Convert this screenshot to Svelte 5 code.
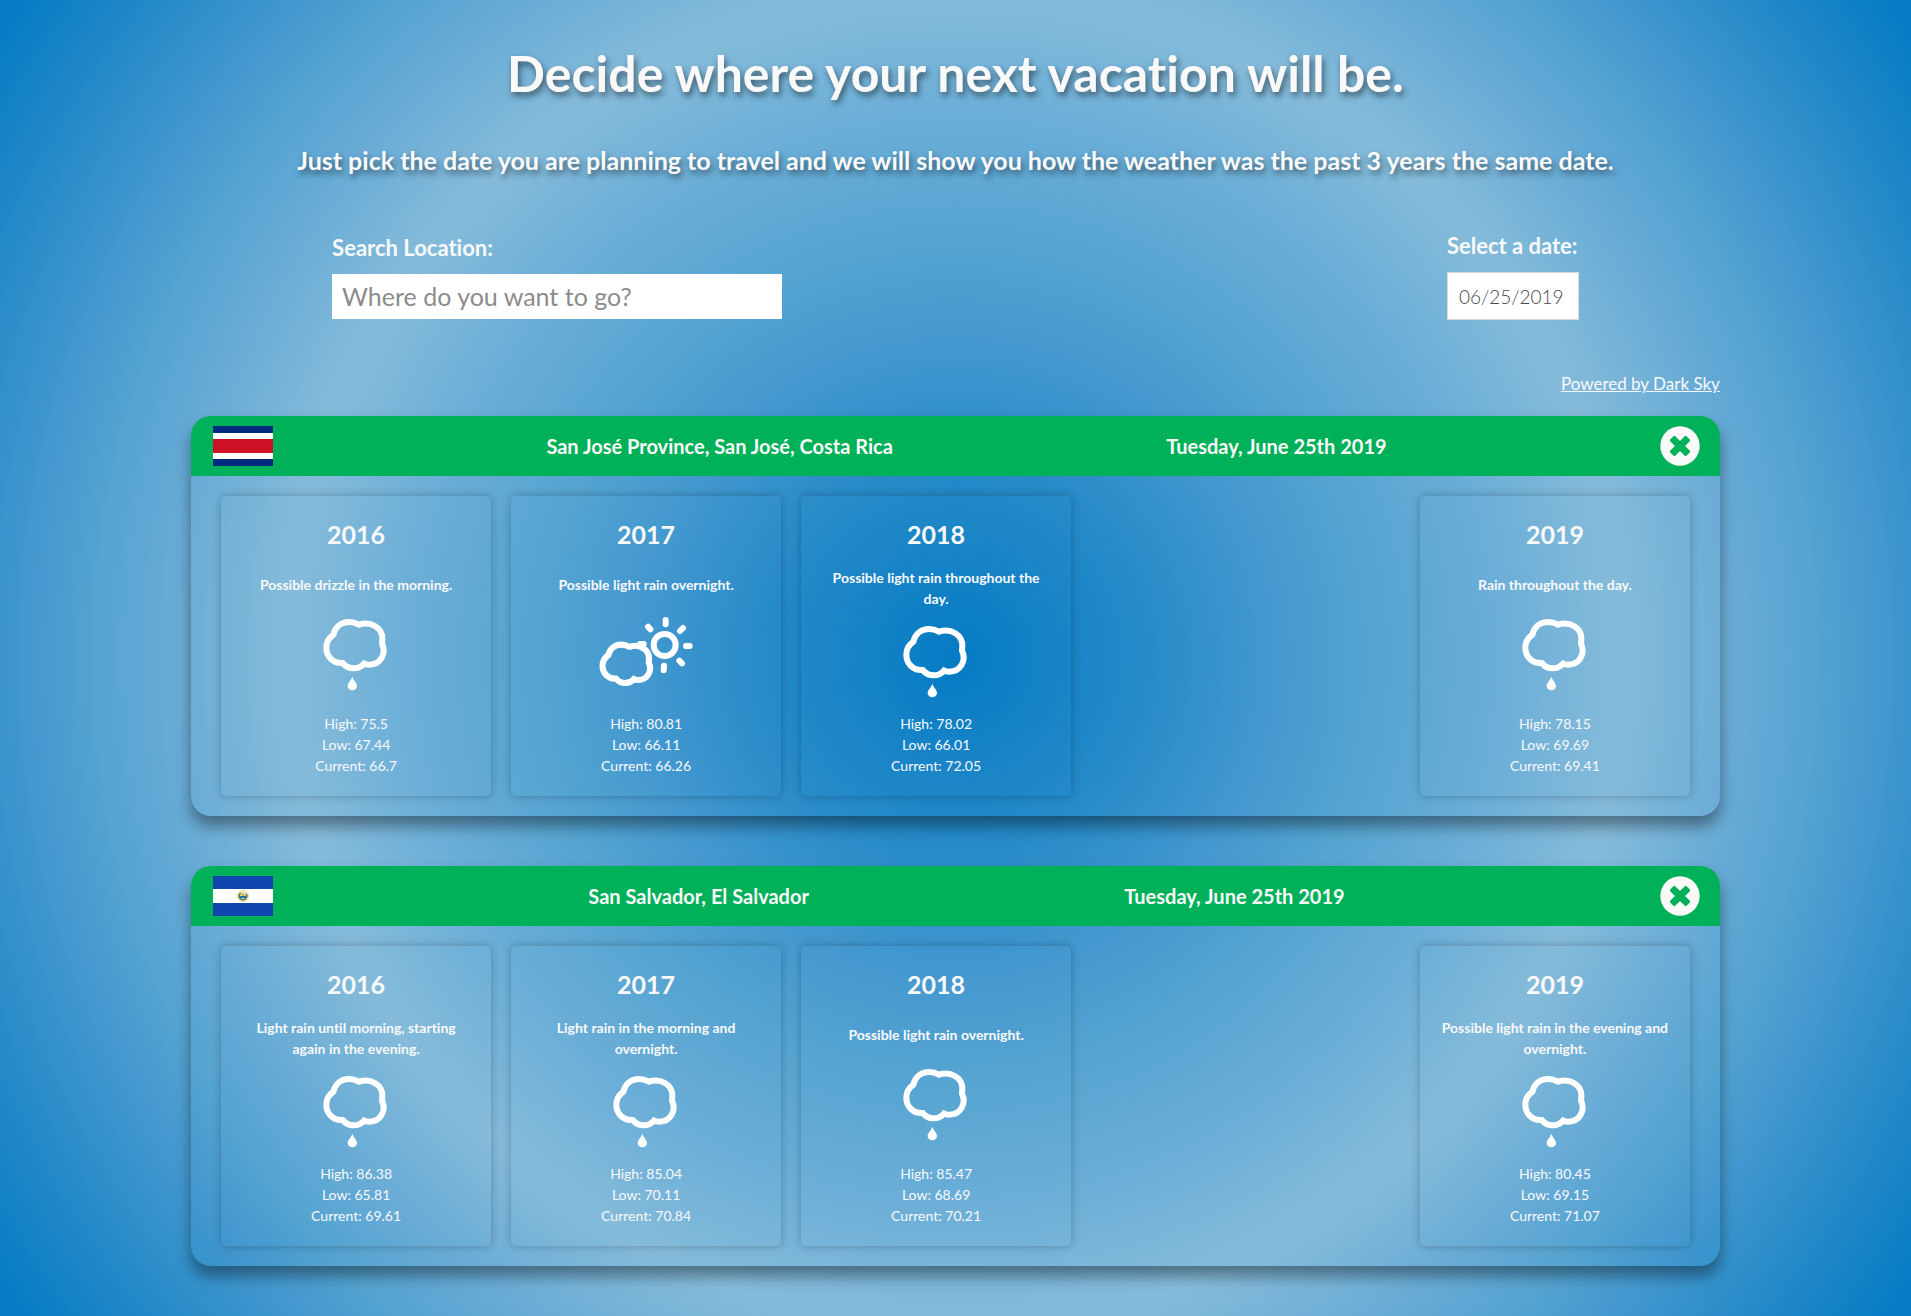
<script>
  const locations = [
    {
      flag: 'cr', place: 'San José Province, San José, Costa Rica', date: 'Tuesday, June 25th 2019',
      years: [
        { year: 2016, summary: 'Possible drizzle in the morning.', icon: 'rain', high: '75.5', low: '67.44', current: '66.7' },
        { year: 2017, summary: 'Possible light rain overnight.', icon: 'partly', high: '80.81', low: '66.11', current: '66.26' },
        { year: 2018, summary: 'Possible light rain throughout the day.', icon: 'rain', high: '78.02', low: '66.01', current: '72.05' },
        { year: 2019, summary: 'Rain throughout the day.', icon: 'rain', high: '78.15', low: '69.69', current: '69.41' }
      ]
    },
    {
      flag: 'sv', place: 'San Salvador, El Salvador', date: 'Tuesday, June 25th 2019',
      years: [
        { year: 2016, summary: 'Light rain until morning, starting again in the evening.', icon: 'rain', high: '86.38', low: '65.81', current: '69.61' },
        { year: 2017, summary: 'Light rain in the morning and overnight.', icon: 'rain', high: '85.04', low: '70.11', current: '70.84' },
        { year: 2018, summary: 'Possible light rain overnight.', icon: 'rain', high: '85.47', low: '68.69', current: '70.21' },
        { year: 2019, summary: 'Possible light rain in the evening and overnight.', icon: 'rain', high: '80.45', low: '69.15', current: '71.07' }
      ]
    }
  ];
  const cloud = 'M100 104C106 80 124 66 147 66C159 66 168 69 177 74C212 62 249 84 247 118L246 131C260 160 242 194 208 194C203 194 197 194 192 191C176 209 146 211 128 189C100 191 79 170 79 143C79 126 88 112 100 104Z';
</script>

<main>
  <h1>Decide where your next vacation will be.</h1>
  <h2>Just pick the date you are planning to travel and we will show you how the weather was the past 3 years the same date.</h2>

  <form class="filters">
    <div class="field">
      <label for="place">Search Location:</label>
      <input id="place" class="place" type="text" placeholder="Where do you want to go?" />
    </div>
    <div class="field">
      <label for="date">Select a date:</label>
      <input id="date" class="date" type="text" value="06/25/2019" />
    </div>
  </form>

  <div class="results">
    <a class="credit" href="#darksky">Powered by Dark Sky</a>
    {#each locations as loc}
      <section class="panel">
        <header>
          {#if loc.flag === 'cr'}
            <svg class="flag" viewBox="0 0 60 40" role="img" aria-label="Costa Rica">
              <path fill="#002b7f" d="M0 0h60v40H0z" /><path fill="#fff" d="M0 7h60v26H0z" /><path fill="#ce1126" d="M0 13h60v14H0z" />
            </svg>
          {:else}
            <svg class="flag" viewBox="0 0 60 40" role="img" aria-label="El Salvador">
              <path fill="#0f47af" d="M0 0h60v40H0z" /><path fill="#fff" d="M0 13h60v14H0z" />
              <circle cx="30" cy="20" r="5.500" fill="#f3efcf" stroke="#e6d9a0" />
              <circle cx="30" cy="20" r="3.800" fill="#dfe7d8" stroke="#4a7550" stroke-width="1.500" stroke-dasharray="18 6" stroke-dashoffset="3" />
              <path d="M30 16l3 5h-6z" fill="#e8b93a" /><path d="M27 20h6v2h-6z" fill="#2f6da8" />
            </svg>
          {/if}
          <h3>{loc.place}</h3>
          <h3>{loc.date}</h3>
          <button class="close" type="button" aria-label="Remove location">
            <svg viewBox="0 0 40 40">
              <circle cx="20" cy="20" r="19.700" fill="#f9f9f9" />
              <g fill="#00b159" transform="rotate(45 20 20)">
                <rect x="8.500" y="16.400" width="23" height="7.200" rx="1.500" />
                <rect x="16.400" y="8.500" width="7.200" height="23" rx="1.500" />
              </g>
            </svg>
          </button>
        </header>
        <div class="cards">
          {#each loc.years as day}
            <article class:now={day.year === 2019}>
              <h4>{day.year}</h4>
              <div class="middle">
                <p class="summary">{day.summary}</p>
                {#if day.icon === 'rain'}
                  <svg class="icon" viewBox="24 15 288 294" aria-hidden="true">
                    <path class="line" d={cloud} />
                    <path class="drop" d="M157 230C161 242 171 249 171 258A14 13 0 0 1 143 258C143 249 153 242 157 230Z" />
                  </svg>
                {:else}
                  <svg class="icon" viewBox="54 15 288 294" aria-hidden="true">
                    <g transform="translate(2 79) scale(.83)"><path class="line small" d={cloud} /></g>
                    <circle class="line" cx="254" cy="135" r="33" />
                    <path class="line" d="M257 60v13M204 80l7 8M309 84l-9 9M318 138h11M298 182l8 8M252 197l-1 14M180 132h11" />
                  </svg>
                {/if}
              </div>
              <ul>
                <li>High: {day.high}</li>
                <li>Low: {day.low}</li>
                <li>Current: {day.current}</li>
              </ul>
            </article>
          {/each}
        </div>
      </section>
    {/each}
  </div>
</main>

<style>
  :global(body) {
    background: radial-gradient(circle, #047bc4 0%, #288bc8 17%, #4398cf 27%, #55a4d1 36%, #69add7 46%, #85bbda 57.500%, #64a9d5 69%, #55a4d1 74%, #4398cf 80%, #288bc8 88%, #047bc4 99%);
    color: #f9f9f9;
  }
  :global(*) { box-sizing: border-box; }
  main { min-height: 100vh; padding: 39px 0 50px; font-family: Lato, sans-serif; font-variant-ligatures: none; }
  h1, h2, h3, h4, p, ul { margin: 0; padding: 0; }
  h1, h2 { text-align: center; text-shadow: 2px 4px 6px rgba(0, 0, 0, .5); }
  h1 { font-size: 50px; line-height: 68px; font-weight: 700; }
  h2 { margin-top: 36px; font-size: 25px; line-height: 34px; font-weight: 700; }
  .filters { width: 80%; margin: 54px auto 0; padding: 0 141px; display: flex; justify-content: space-between; align-items: center; }
  .field { display: flex; flex-direction: column; }
  label { font-size: 22px; line-height: 30px; font-weight: 700; margin-bottom: 11px; }
  input { border: 0; background: #fff; font-family: Lato, sans-serif; }
  .place { width: 450px; height: 45px; padding: 0 10px; font-size: 25px; }
  .place::placeholder { color: #8c8c8c; }
  .date { width: 132px; height: 48px; padding: 0 11px; border: 1px solid #dbdbdb; font-size: 19px; font-weight: 300; color: #484848; }
  .results { width: 80%; margin: 51px auto 0; display: flex; flex-direction: column; }
  .credit { align-self: flex-end; color: #f9f9f9; font-size: 17px; line-height: 26px; margin-bottom: 19px; }
  .panel { border-radius: 20px; box-shadow: 0 10px 15px rgba(0, 0, 0, .4); margin-bottom: 50px; }
  .panel:last-child { margin-bottom: 0; }
  header { height: 60px; padding: 0 20px 0 22px; border-radius: 20px 20px 0 0; background: #00b159; display: flex; justify-content: space-between; align-items: center; }
  h3 { font-size: 20px; line-height: 28px; font-weight: 700; }
  .flag { width: 60px; height: 40px; }
  .close { width: 40px; height: 40px; padding: 0; border: 0; background: none; }
  .close svg { display: block; }
  .cards { display: flex; padding: 20px 30px; gap: 20px; }
  article { width: 270px; height: 300px; padding: 18px 20px 20px; border-radius: 5px; box-shadow: 0 0 10px rgba(0, 0, 0, .25); text-align: center; display: flex; flex-direction: column; }
  .now { margin-left: auto; }
  h4 { margin-bottom: 10px; font-size: 25px; line-height: 40px; font-weight: 700; }
  .middle { flex: 1; display: flex; flex-direction: column; align-items: center; justify-content: space-evenly; }
  .summary { font-size: 14px; line-height: 21px; font-weight: 700; }
  .icon { flex-shrink: 0; width: 96px; height: 98px; }
  .line { fill: none; stroke: #fff; stroke-width: 18; stroke-linecap: round; }
  .small { stroke-width: 22; }
  .drop { fill: #fff; }
  ul { list-style: none; font-size: 14px; line-height: 21px; }
</style>
